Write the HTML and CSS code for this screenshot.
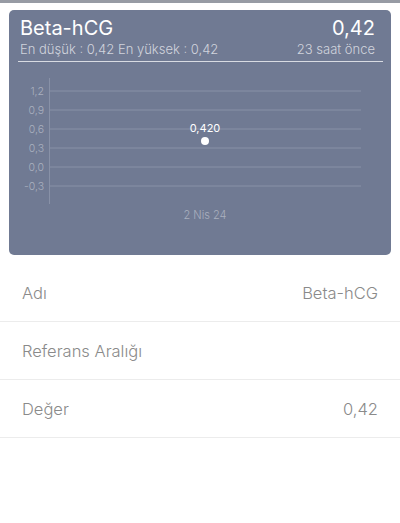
FILE: index.html
```html
<!DOCTYPE html>
<html lang="tr">
<head>
  <meta charset="UTF-8">
  <meta name="viewport" content="width=device-width, initial-scale=1.0">
  <title>Beta-hCG</title>
  <link rel="stylesheet" href="styles.css">
</head>
<body>
  <div class="top-strip"></div>

  <div class="card">
    <div class="card-head">
      <div class="head-row">
        <span class="test-name">Beta-hCG</span>
        <span class="test-value">0,42</span>
      </div>
      <div class="head-row sub">
        <span>En düşük : 0,42 En yüksek : 0,42</span>
        <span>23 saat önce</span>
      </div>
    </div>
    <div class="card-line"></div>

    <svg class="chart" width="382" height="170" viewBox="0 0 382 170">
      <g class="grid">
        <line x1="41" y1="27" x2="352" y2="27"/>
        <line x1="41" y1="46" x2="352" y2="46"/>
        <line x1="41" y1="65" x2="352" y2="65"/>
        <line x1="41" y1="84" x2="352" y2="84"/>
        <line x1="41" y1="103" x2="352" y2="103"/>
        <line x1="41" y1="122" x2="352" y2="122"/>
        <line x1="40.5" y1="14" x2="40.5" y2="140"/>
      </g>
      <g class="axis-label">
        <text x="35" y="31">1,2</text>
        <text x="35" y="50">0,9</text>
        <text x="35" y="69">0,6</text>
        <text x="35" y="88">0,3</text>
        <text x="35" y="107">0,0</text>
        <text x="35" y="126">-0,3</text>
      </g>
      <text class="point-label" x="196" y="68">0,420</text>
      <circle class="point" cx="196" cy="77" r="4"/>
      <text class="date-label" x="196" y="155">2 Nis 24</text>
    </svg>
  </div>

  <div class="info-list">
    <div class="info-row">
      <span>Adı</span>
      <span>Beta-hCG</span>
    </div>
    <div class="info-row">
      <span>Referans Aralığı</span>
      <span></span>
    </div>
    <div class="info-row">
      <span>Değer</span>
      <span>0,42</span>
    </div>
  </div>
</body>
</html>
```

FILE: styles.css
```css
body {
  margin: 0;
  background-color: white;
  font-family: Inter, 'Noto Sans', sans-serif;
}

.top-strip {
  height: 3px;
  background-color: #979ba4;
}

.card {
  margin: 7px 9px 0 9px;
  height: 245px;
  background-color: #707a93;
  border-radius: 5px;
  color: white;
}

.card-head {
  padding: 5px 16px 0 11px;
}

.head-row {
  display: flex;
  justify-content: space-between;
  align-items: baseline;
}

.test-name,
.test-value {
  font-size: 20px;
  line-height: 26px;
}

.sub {
  font-size: 13px;
  line-height: 16px;
  font-weight: 300;
  color: #d0d4dd;
}

.card-line {
  height: 1px;
  margin: 4px 8px 0 9px;
  background-color: #d8dbe2;
}

.chart {
  display: block;
  margin-top: 2px;
}

.grid line {
  stroke: #8891a7;
  stroke-width: 1;
}

.axis-label text {
  font-size: 10.5px;
  font-weight: 300;
  fill: #aab0bf;
  text-anchor: end;
}

.point-label {
  font-size: 11px;
  fill: white;
  text-anchor: middle;
}

.point {
  fill: white;
}

.date-label {
  font-size: 11px;
  font-weight: 300;
  fill: #aab0bf;
  text-anchor: middle;
}

.info-list {
  margin-top: 9px;
}

.info-row {
  display: flex;
  justify-content: space-between;
  align-items: center;
  height: 57px;
  padding: 0 22px;
  border-bottom: 1px solid #ececec;
  font-size: 16.5px;
  font-weight: 300;
  color: #8a8a8a;
}
```
